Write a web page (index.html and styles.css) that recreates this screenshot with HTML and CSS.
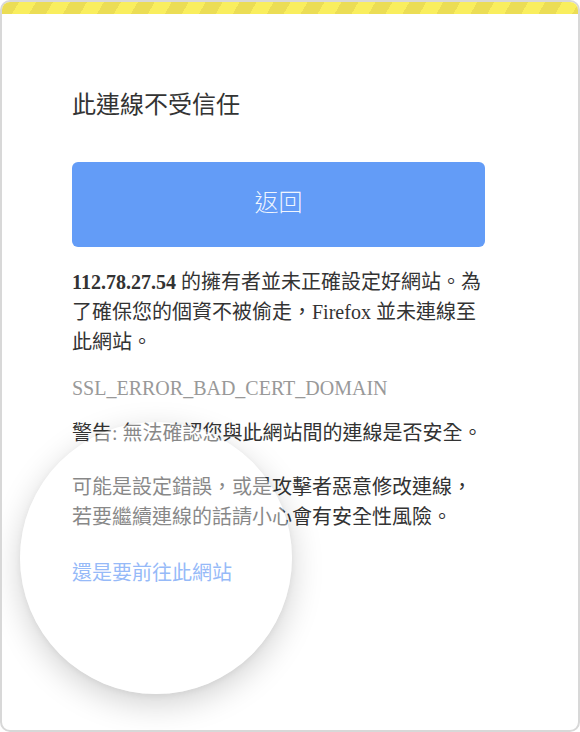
FILE: index.html
```html
<!DOCTYPE html>
<html lang="zh-Hant">
<head>
<meta charset="utf-8">
<title>此連線不受信任</title>
<link rel="stylesheet" href="styles.css">
</head>
<body>
<div class="card">
  <div class="stripe"></div>
  <div class="content">
    <h1 class="title">此連線不受信任</h1>
    <button class="back-btn" type="button">返回</button>
    <p class="desc"><b class="ip">112.78.27.54</b> 的擁有者並未正確設定好網站。為了確保您的個資不被偷走，Firefox 並未連線至此網站。</p>
    <p class="code">SSL_ERROR_BAD_CERT_DOMAIN</p>
    <p class="warn">警告: 無法確認您與此網站間的連線是否安全。</p>
    <p class="risk">可能是設定錯誤，或是攻擊者惡意修改連線，若要繼續連線的話請小心會有安全性風險。</p>
    <a class="proceed" href="#">還是要前往此網站</a>
  </div>
  <div class="lens"></div>
</div>
</body>
</html>
```

FILE: styles.css
```css
html, body {
  margin: 0;
  padding: 0;
  background: #ffffff;
}

.card {
  position: relative;
  width: 580px;
  height: 732px;
  box-sizing: border-box;
  border: 2px solid #d8d8d8;
  border-radius: 10px;
  overflow: hidden;
  background: #ffffff;
  font-family: "Liberation Serif", "Noto Sans CJK TC", serif;
  color: #333333;
}

.stripe {
  height: 12px;
  background: repeating-linear-gradient(120deg, #ebdd55 0, #ebdd55 14.7px, #f9ee5e 14.7px, #f9ee5e 29.4px);
}

.content {
  display: flex;
  flex-direction: column;
  align-items: flex-start;
  padding: 0 93px 0 70px;
}

.title {
  margin: 72px 0 0;
  font-family: "Noto Sans CJK TC", sans-serif;
  font-weight: 400;
  font-size: 24px;
  line-height: 34px;
  color: #333333;
}

.back-btn {
  margin-top: 42px;
  width: 413px;
  height: 85px;
  border: none;
  border-radius: 6px;
  background: #639cf7;
  color: rgba(255, 255, 255, 0.92);
  font-family: "Noto Sans CJK TC", sans-serif;
  font-size: 24px;
  font-weight: 300;
  padding: 0 0 8px;
}

.desc, .code, .warn, .risk {
  margin: 0;
  font-size: 20px;
  line-height: 30px;
}

.desc {
  margin-top: 20px;
}

.ip {
  font-weight: 700;
}

.code {
  margin-top: 16px;
  color: #999999;
}

.warn {
  margin-top: 15px;
}

.risk {
  margin-top: 24px;
}

.proceed {
  margin-top: 25px;
  font-family: "Noto Sans CJK TC", sans-serif;
  font-size: 20px;
  line-height: 30px;
  color: #4a88f3;
  text-decoration: none;
}

.lens {
  position: absolute;
  left: 18px;
  top: 420px;
  width: 272px;
  height: 272px;
  border-radius: 50%;
  background: rgba(255, 255, 255, 0.42);
  box-shadow: 0 10px 32px rgba(0, 0, 0, 0.18), 0 2px 6px rgba(0, 0, 0, 0.05);
}
```
